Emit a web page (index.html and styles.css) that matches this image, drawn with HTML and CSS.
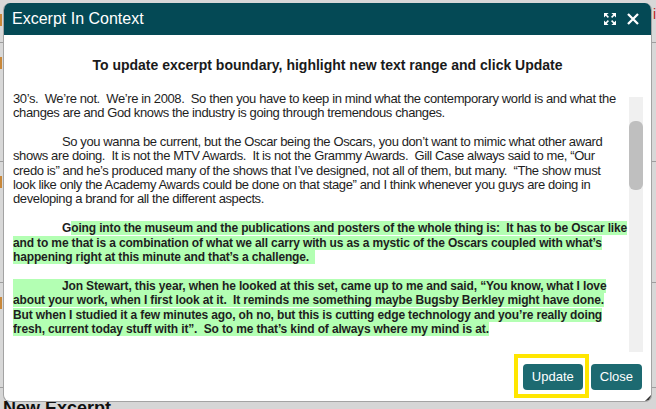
FILE: index.html
```html
<!DOCTYPE html>
<html lang="en">
<head>
<meta charset="utf-8">
<title>Excerpt In Context</title>
<link rel="stylesheet" href="styles.css">
</head>
<body>
<div class="page">
  <div class="row row-a"><span class="mark-left"></span><span class="mark-right">i</span></div>
  <div class="row row-b"><span class="mark-left"></span></div>
  <div class="row row-c"><span class="mark-left"></span></div>
  <div class="row row-d"><span class="mark-left"></span></div>
  <h2 class="page-heading">New Excerpt</h2>
</div>

<div class="dialog" role="dialog" aria-label="Excerpt In Context">
  <div class="titlebar">
    <span class="title">Excerpt In Context</span>
    <div class="title-actions">
      <svg class="icon" width="12" height="12" viewBox="0 0 12 12" aria-label="Maximize">
        <g fill="#fff" stroke="#fff" stroke-width="1.6" stroke-linecap="butt">
          <polygon points="0,0 4.6,0 0,4.6" stroke="none"/>
          <line x1="1.5" y1="1.5" x2="4.4" y2="4.4"/>
          <polygon points="12,0 7.4,0 12,4.6" stroke="none"/>
          <line x1="10.5" y1="1.5" x2="7.6" y2="4.4"/>
          <polygon points="0,12 4.6,12 0,7.4" stroke="none"/>
          <line x1="1.5" y1="10.5" x2="4.4" y2="7.6"/>
          <polygon points="12,12 7.4,12 12,7.4" stroke="none"/>
          <line x1="10.5" y1="10.5" x2="7.6" y2="7.6"/>
        </g>
      </svg>
      <svg class="icon" width="12" height="12" viewBox="0 0 12 12" aria-label="Close">
        <path d="M1 1 L11 11 M11 1 L1 11" stroke="#fff" stroke-width="2.3" fill="none"/>
      </svg>
    </div>
  </div>

  <p class="instructions">To update excerpt boundary, highlight new text range and click Update</p>

  <div class="excerpt">
    <div class="excerpt-text">
      <p class="para">30’s.&nbsp; We’re not.&nbsp; We’re in 2008.&nbsp; So then you have to keep in mind what the contemporary world is and what the<br>changes are and God knows the industry is going through tremendous changes.</p>
      <p class="para"><span class="tab"></span>So you wanna be current, but the Oscar being the Oscars, you don’t want to mimic what other award<br>shows are doing.&nbsp; It is not the MTV Awards.&nbsp; It is not the Grammy Awards.&nbsp; Gill Case always said to me, “Our<br>credo is” and he’s produced many of the shows that I’ve designed, not all of them, but many.&nbsp; “The show must<br>look like only the Academy Awards could be done on that stage” and I think whenever you guys are doing in<br>developing a brand for all the different aspects.</p>
      <p class="para bold"><span class="tab"></span>G<span class="hl">oing into the museum and the publications and posters of the whole thing is:&nbsp; It has to be Oscar like<br>and to me that is a combination of what we all carry with us as a mystic of the Oscars coupled with what’s<br>happening right at this minute and that’s a challenge.&nbsp;&nbsp;</span></p>
      <p class="para bold"><span class="hl"><span class="tab"></span>Jon Stewart, this year, when he looked at this set, came up to me and said, “You know, what I love<br>about your work, when I first look at it.&nbsp; It reminds me something maybe Bugsby Berkley might have done.<br>But when I studied it a few minutes ago, oh no, but this is cutting edge technology and you’re really doing<br>fresh, current today stuff with it”.&nbsp; So to me that’s kind of always where my mind is at.</span></p>
    </div>
    <div class="scrollbar"><div class="thumb"></div></div>
  </div>

  <div class="footer">
    <span class="update-wrap"><button class="btn" type="button">Update</button></span>
    <button class="btn" type="button">Close</button>
  </div>
  <span class="resize-grip"></span>
</div>
</body>
</html>
```

FILE: styles.css
```css
html, body {
  margin: 0;
  padding: 0;
}

body {
  width: 656px;
  height: 409px;
  overflow: hidden;
  background: #d6d6d6;
  font-family: "Liberation Sans", Arial, sans-serif;
  color: #222;
}

/* background page (mostly covered by the modal) */
.page {
  display: flex;
  flex-direction: column;
}

.row {
  position: relative;
  border-bottom: 1px solid #9e9e9e;
  background: #d8d8d8;
}

.row-a { height: 42px; }
.row-b { height: 118px; }
.row-c { height: 120px; }
.row-d { height: 104px; }

.mark-left {
  display: block;
  width: 2px;
  height: 12px;
  margin-top: 14px;
  background: #c9883a;
}

.mark-right {
  position: absolute;
  right: 0;
  top: 6px;
  color: #c02020;
  font-size: 14px;
}

.page-heading {
  margin: 10px 0 0 3px;
  font-size: 18px;
  font-weight: bold;
  line-height: 21px;
  color: #111;
}

/* modal dialog */
.dialog {
  position: absolute;
  left: 3px;
  top: 3px;
  width: 647px;
  height: 398px;
  display: flex;
  flex-direction: column;
  background: #fff;
  border: 1px solid #a3a3a3;
  border-top: none;
  border-radius: 7px;
  overflow: hidden;
}

.titlebar {
  height: 32px;
  flex: none;
  display: flex;
  align-items: center;
  justify-content: space-between;
  padding: 0 12px 0 8px;
  background: #044955;
}

.title {
  color: #fff;
  font-size: 16px;
  line-height: 18px;
}

.title-actions {
  display: flex;
  align-items: center;
  gap: 11px;
}

.icon {
  display: block;
}

.instructions {
  margin: 23px 0 0;
  font-size: 14px;
  font-weight: bold;
  line-height: 15px;
  text-align: center;
  color: #1a1a1a;
}

.excerpt {
  margin-top: 18.5px;
  height: 260.5px;
  flex: none;
  display: flex;
  padding: 0 8px 0 9px;
}

.excerpt-text {
  flex: 1;
  min-width: 0;
  overflow: hidden;
  font-size: 13px;
  line-height: 14.4px;
  letter-spacing: -0.39px;
  color: #1e1e1e;
}

.para {
  margin: 0 0 14.4px;
  white-space: nowrap;
}

.bold {
  font-weight: bold;
  font-size: 12px;
  letter-spacing: -0.14px;
}

.tab {
  display: inline-block;
  width: 49px;
}

.hl {
  background: #b3ffb3;
}

.scrollbar {
  width: 14px;
  flex: none;
  margin-top: 5.5px;
  height: 255px;
  background: #f0f0f0;
}

.thumb {
  margin: 24px 0 0 0;
  height: 69px;
  border-radius: 6px;
  background: #bfbfbf;
}

.footer {
  display: flex;
  justify-content: flex-end;
  gap: 8px;
  padding: 12px 9px 0 0;
}

.update-wrap {
  position: relative;
  display: flex;
}

.update-wrap::after {
  content: "";
  position: absolute;
  left: -9px;
  right: -6px;
  top: -10px;
  bottom: -8px;
  border: 4px solid #ffe600;
  pointer-events: none;
}

.btn {
  height: 26px;
  padding: 0 9px;
  border: none;
  border-radius: 4px;
  background: #1d6a71;
  color: #fff;
  font-family: "Liberation Sans", Arial, sans-serif;
  font-size: 13px;
  line-height: 26px;
}

.resize-grip {
  position: absolute;
  right: 0;
  bottom: 0;
  width: 0;
  height: 0;
  border-style: solid;
  border-width: 0 0 6px 6px;
  border-color: transparent transparent #333 transparent;
}
```
